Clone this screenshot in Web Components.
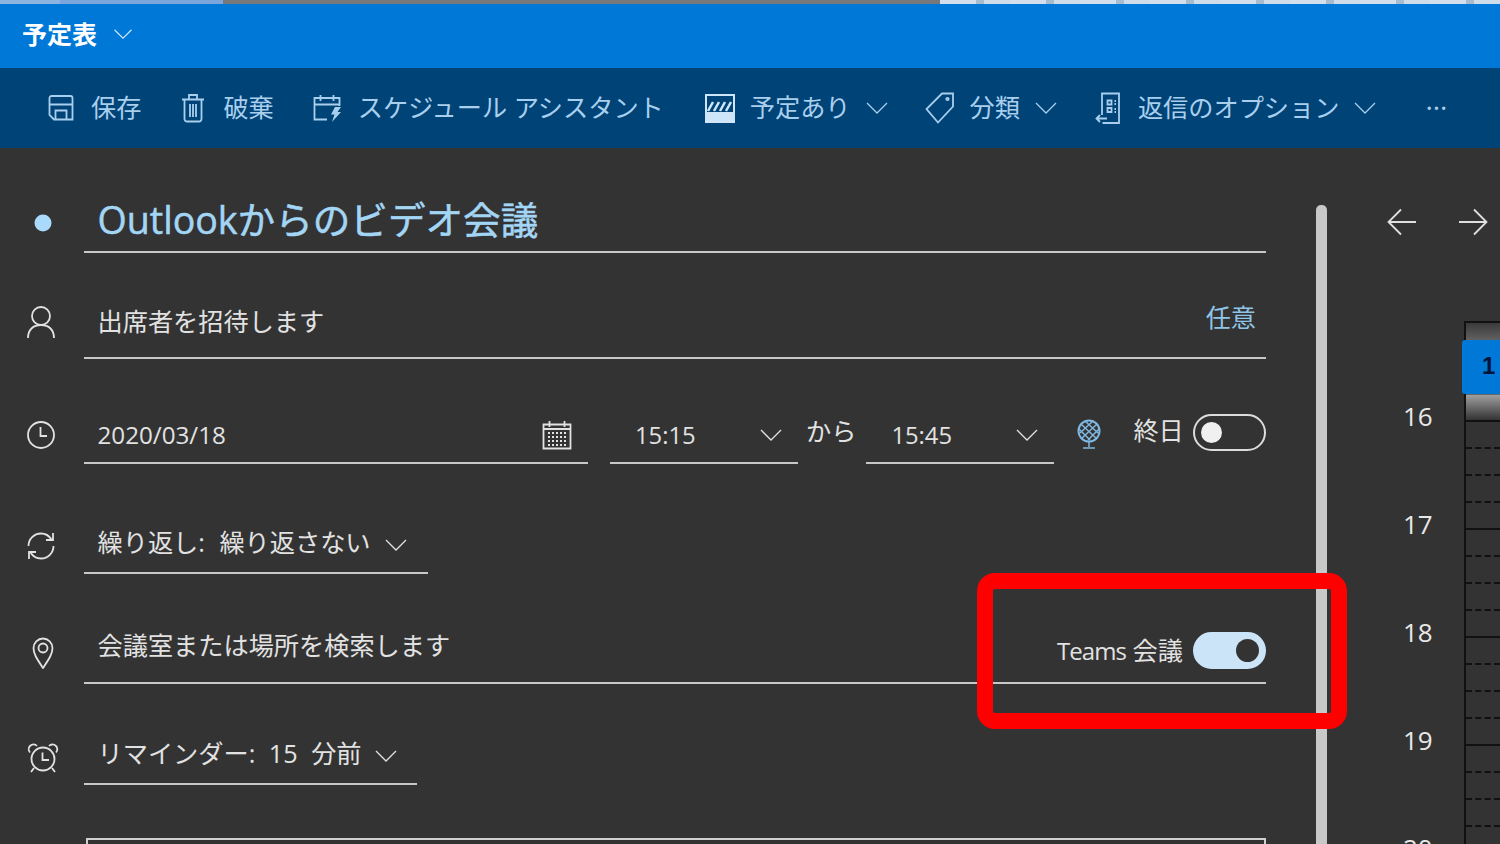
<!doctype html>
<html lang="ja">
<head>
<meta charset="utf-8">
<title>予定表</title>
<style>
html, body { margin: 0; height: 100%; overflow: hidden; background: #333; }
body { font-family: "Open Sans", "Noto Sans CJK JP", sans-serif; }
</style>
</head>
<body>
<event-page>
  <title-bar slot="top">予定表</title-bar>
  <tool-bar slot="top">
    <tool-item icon="save">保存</tool-item>
    <tool-item icon="trash" style="margin-left:-1px">破棄</tool-item>
    <tool-item icon="assist" style="margin-left:1px">スケジュール アシスタント</tool-item>
    <tool-item icon="busy" menu style="margin-left:3px">予定あり</tool-item>
    <tool-item icon="tag" menu style="margin-left:-1px">分類</tool-item>
    <tool-item icon="reply" menu style="margin-left:-2px">返信のオプション</tool-item>
    <tool-item more style="margin-left:11px"></tool-item>
  </tool-bar>

  <form-row style="--row:105px;--icon-b:21px" slot="form">
    <ui-icon slot="icon" name="dot" style="margin-left:4px"></ui-icon>
    <form-field style="height:70px;--text-y:3px;font-size:37.600px;color:#a3d5f5;-webkit-text-stroke:.5px #a3d5f5">Outlookからのビデオ会議</form-field>
  </form-row>
  <form-row style="--row:106px;--icon-b:20px" slot="form">
    <ui-icon slot="icon" name="person"></ui-icon>
    <form-field style="height:70px;--text-y:-2px">出席者を招待します<span slot="end" style="color:#8fc4e6;position:relative;top:-6px;margin-right:10px">任意</span></form-field>
  </form-row>
  <form-row style="--row:105px;--icon-b:14px" slot="form">
    <ui-icon slot="icon" name="clock"></ui-icon>
    <date-line></date-line>
  </form-row>
  <form-row style="--row:110px;--icon-b:13px" slot="form">
    <ui-icon slot="icon" name="sync"></ui-icon>
    <form-field style="height:70px;width:344px;padding-right:21px;--text-y:4px;word-spacing:8px">繰り返し: 繰り返さない<ui-icon slot="end" name="chevron" style="position:relative;top:7px"></ui-icon></form-field>
  </form-row>
  <form-row style="--row:110px;--icon-b:15px" slot="form">
    <ui-icon slot="icon" name="pin" style="margin-left:4px"></ui-icon>
    <form-field style="height:70px;--text-y:-3px">会議室または場所を検索します<span slot="end" style="display:flex;align-items:center;gap:10px;position:relative;top:2px"><span><span style="font-size:24px;letter-spacing:-.9px">Teams</span> 会議</span><on-off checked></on-off></span></form-field>
  </form-row>
  <form-row style="--row:101px;--icon-b:11px" slot="form">
    <ui-icon slot="icon" name="alarm" style="margin-left:4px"></ui-icon>
    <form-field style="height:70px;width:333px;padding-right:20px;--text-y:4px;word-spacing:7px">リマインダー: 15 分前<ui-icon slot="end" name="chevron" style="position:relative;top:7px"></ui-icon></form-field>
  </form-row>
  <note-box slot="form"></note-box>

  <day-rail slot="rail"></day-rail>
</event-page>
<red-mark></red-mark>

<script>
// stroke icons, all drawn on their own small viewBox
const ICONS = {
  chevron: '<svg width="22" height="12" viewBox="0 0 22 12"><path d="M1 1l10 10L21 1" stroke-width="1.300"/></svg>',
  save: '<svg width="26" height="26" viewBox="0 0 26 26"><path d="M1.500 3a2 2 0 0 1 2-2h19a2 2 0 0 1 2 2v21.500H6L1.500 20zM1.500 9.500h23M7.500 24.500v-9h11v9"/></svg>',
  trash: '<svg width="24" height="30" viewBox="0 0 24 30"><path d="M1 6.500h22M8 6V2h8v4M3.500 7v19a2.500 2.500 0 0 0 2.500 2.500h12a2.500 2.500 0 0 0 2.500-2.500V7M9 11v13M12 11v13M15 11v13"/></svg>',
  assist: '<svg width="30" height="30" viewBox="0 0 30 30"><path d="M14 26.500H1.500V5h25v8M1.500 11.500h25M7.500 2v6M20.500 2v6"/><path d="M22 14h6l-3.500 5H28l-9 10 2.500-7.500H18z" fill="#a9cfee" stroke="none"/></svg>',
  busy: '<svg width="30" height="30" viewBox="0 0 30 30"><rect x="0" y="1" width="30" height="29" fill="#cfe6f8" stroke="none"/><rect x="2" y="3" width="26" height="5" fill="#004377" stroke="none"/><rect x="2" y="8" width="26" height="11" fill="#004377" stroke="none"/><path d="M3 18l5-9M9 18l5-9M15 18l5-9M21 18l5-9" stroke="#cfe6f8" stroke-width="2.500"/></svg>',
  tag: '<svg width="30" height="32" viewBox="0 0 30 32"><path d="M17 1.500h11v13L13 30.500 1.500 17z"/><circle cx="22.500" cy="7" r="1.200"/></svg>',
  reply: '<svg width="26" height="32" viewBox="0 0 26 32"><path d="M7 23V1.500h17V31H7.500M12.500 8.500h4v4h-4zM12.500 16h4v4h-4zM19.500 9h1.500M19.500 12h1.500M19.500 17h1.500M19.500 20h1.500M12 26.500H1.500M5 23l-3.500 3.500L5 30"/></svg>',
  dot: '<svg width="18" height="18" viewBox="0 0 18 18"><circle cx="9" cy="9" r="8.500" fill="#a9dafb" stroke="none"/></svg>',
  person: '<svg width="30" height="34" viewBox="0 0 30 34"><circle cx="15" cy="11" r="9"/><path d="M2 33c0-8 5-13 13-13s13 5 13 13"/></svg>',
  clock: '<svg width="30" height="30" viewBox="0 0 30 30"><circle cx="15" cy="15" r="13"/><path d="M14.500 7v9H21"/></svg>',
  sync: '<svg width="30" height="30" viewBox="0 0 30 30"><path d="M2.500 15C2.500 8 8 2.500 15 2.500c4.500 0 8 2 10.500 6M27.500 15c0 7-5.500 12.500-12.500 12.500-4.500 0-8-2-10.500-6M27 2v7h-7M3 28v-7h7"/></svg>',
  pin: '<svg width="22" height="32" viewBox="0 0 22 32"><path d="M11 31C5 22 1.500 17 1.500 11a9.500 9.500 0 0 1 19 0C20.500 17 17 22 11 31z"/><circle cx="11" cy="11" r="4.500"/></svg>',
  alarm: '<svg width="32" height="32" viewBox="0 0 32 32"><circle cx="16" cy="17" r="11.500"/><path d="M15.500 10.500V18H22M3 10.500a4.500 4.500 0 0 1 7-6.500M29 10.500a4.500 4.500 0 0 0-7-6.500M7 26l-3 4M25 26l3 4"/></svg>',
  calendar: '<svg width="30" height="30" viewBox="0 0 30 30"><path d="M1.500 4.500h27v24h-27zM1.500 9h27M7.500 1v6M22.500 1v6"/><path d="M6 13h18M6 17h18M6 21h18M6 25h18" stroke-dasharray="2 2" stroke-width="2"/></svg>',
  globe: '<svg width="28" height="32" viewBox="0 0 28 32" style="stroke:#7fb8e0"><circle cx="14" cy="13" r="10.500" stroke-width="2"/><path d="M6 6l16 15M10 3l13 12M4 11l11 11M22 6L6 21M18 3L5 15M24 11L13 22M14 24v5M8 30h12" stroke-width="1.500"/></svg>',
  left: '<svg width="30" height="28" viewBox="0 0 30 28"><path d="M29 14H2M14 1.500L1.500 14 14 26.500"/></svg>',
  right: '<svg width="30" height="28" viewBox="0 0 30 28"><path d="M1 14h27M16 1.500L28.500 14 16 26.500"/></svg>'
};

function shadow(el, html) {
  el.attachShadow({mode: 'open'}).innerHTML = html;
}

class UiIcon extends HTMLElement {
  constructor() {
    super();
    shadow(this, `<style>
:host { display: inline-flex; align-items: center; justify-content: center; flex: none; }
svg { display: block; fill: none; stroke: currentColor; stroke-width: 1.800; }
</style>${ICONS[this.getAttribute('name')] || ''}`);
  }
}

class EventPage extends HTMLElement {
  constructor() {
    super();
    shadow(this, `<style>
:host { display: flex; flex-direction: column; width: 1500px; height: 844px; overflow: hidden; background: #333; }
.strip { display: flex; height: 4px; flex: none; }
.strip i { display: block; }
.a { width: 60px; background: #8eb4e0; }
.b { width: 163px; background: #7ba6dc; }
.c { width: 717px; background: #77787a; }
.d { flex: 1; background: repeating-linear-gradient(90deg, #d3dfec 0 36px, #a8bccf 36px 44px, #cfdcea 44px 70px); }
main { flex: 1; display: flex; min-height: 0; }
.form { width: 1266px; flex: none; display: flex; flex-direction: column; }
.bar { width: 11px; margin: 57px 0 0 50px; flex: none; background: #c8c8c8; border-radius: 5px 5px 0 0; }
</style>
<div class="strip"><i class="a"></i><i class="b"></i><i class="c"></i><i class="d"></i></div>
<slot name="top"></slot>
<main>
  <div class="form"><slot name="form"></slot></div>
  <div class="bar"></div>
  <slot name="rail"></slot>
</main>`);
  }
}

class TitleBar extends HTMLElement {
  constructor() {
    super();
    shadow(this, `<style>
:host { display: flex; align-items: center; gap: 15px; height: 64px; flex: none; padding: 0 0 4px 22px; box-sizing: border-box; background: #0078d7; color: #fff; font-size: 25px; font-weight: 700; line-height: 1; }
ui-icon { color: #d3e8f8; }
</style><slot></slot><ui-icon name="chevron" style="transform:scale(.85)"></ui-icon>`);
  }
}

class ToolBar extends HTMLElement {
  constructor() {
    super();
    shadow(this, `<style>
:host { display: flex; align-items: center; gap: 38px; height: 80px; flex: none; padding-left: 46px; box-sizing: border-box; background: #004377; color: #a9cfee; font-size: 25.200px; font-weight: 400; line-height: 1; white-space: nowrap; }
</style><slot></slot>`);
  }
}

class ToolItem extends HTMLElement {
  constructor() {
    super();
    const more = this.hasAttribute('more');
    const icon = this.getAttribute('icon');
    shadow(this, `<style>
:host { display: flex; align-items: center; gap: 15px; }
.ico { width: 30px; justify-content: center; }
.dots { font-size: 28px; letter-spacing: 0; position: relative; top: -1px; }
</style>
${more ? '<span class="dots">···</span>' : `<ui-icon class="ico" name="${icon}"></ui-icon><slot></slot>`}
${this.hasAttribute('menu') ? '<ui-icon name="chevron"></ui-icon>' : ''}`);
  }
}

class FormRow extends HTMLElement {
  constructor() {
    super();
    shadow(this, `<style>
:host { display: grid; grid-template-columns: 84px 1fr; align-items: end; height: var(--row); flex: none; color: #e2e2e2; font-size: 25.200px; font-weight: 400; }
.icon { display: flex; justify-content: center; padding: 0 2px var(--icon-b) 0; }
</style><div class="icon"><slot name="icon"></slot></div><slot></slot>`);
  }
}

class FormField extends HTMLElement {
  constructor() {
    super();
    shadow(this, `<style>
:host { display: flex; align-items: center; justify-content: space-between; box-sizing: border-box; border-bottom: 2px solid #c8c8c8; padding-left: 13.500px; white-space: nowrap; line-height: 1.2; }
.t { position: relative; top: var(--text-y, 0); }
.end { display: flex; align-items: center; }
</style><span class="t"><slot></slot></span><span class="end"><slot name="end"></slot></span>`);
  }
}

class OnOff extends HTMLElement {
  constructor() {
    super();
    shadow(this, `<style>
:host { display: flex; align-items: center; width: 73px; height: 37px; box-sizing: border-box; border: 2.500px solid #dcdcdc; border-radius: 19px; padding: 0 0 0 6px; flex: none; }
i { display: block; width: 21px; height: 21px; border-radius: 50%; background: #f0f0f0; }
:host([checked]) { background: #cce4f8; border-color: #cce4f8; justify-content: flex-end; padding: 0 5px 0 0; }
:host([checked]) i { width: 23px; height: 23px; background: #333; }
</style><i></i>`);
  }
}

class DateLine extends HTMLElement {
  constructor() {
    super();
    shadow(this, `<style>
:host { display: flex; align-items: flex-end; color: #e2e2e2; white-space: nowrap; font-size: 25.200px; font-weight: 400; }
form-field { height: 70px; padding-top: 14px; font-size: 24.200px; }
.time { margin-left: 22px; }
.t2, .time { width: 188px; padding-left: 25px; padding-right: 16px; font-size: 23.800px; }
.small { position: relative; top: -16px; }
.kara { margin: 0 10px 0 8px; }
.all { margin: 0 9px 0 30px; top: -17px; }
.toggle { position: relative; top: -13px; }
.g { position: relative; top: -14px; margin-left: 21px; }
</style>
<form-field style="width:504px;padding-right:16px">2020/03/18<ui-icon slot="end" name="calendar"></ui-icon></form-field>
<form-field class="time">15:15<ui-icon slot="end" name="chevron"></ui-icon></form-field>
<span class="small kara">から</span>
<form-field class="t2">15:45<ui-icon slot="end" name="chevron"></ui-icon></form-field>
<ui-icon class="g" name="globe"></ui-icon>
<span class="small all">終日</span>
<on-off class="toggle"></on-off>`);
  }
}

class NoteBox extends HTMLElement {
  constructor() {
    super();
    shadow(this, `<style>
:host { display: block; height: 40px; margin: 53px 0 0 86px; box-sizing: border-box; border: 2px solid #d0d0d0; border-bottom: 0; flex: none; }
</style>`);
  }
}

class DayRail extends HTMLElement {
  constructor() {
    super();
    const hours = [16, 17, 18, 19, 20];
    shadow(this, `<style>
:host { display: grid; grid-template-columns: 137px 1fr; grid-template-rows: 148px 1fr; flex: 1; min-width: 0; color: #e8e8e8; overflow: hidden; }
.nav { grid-column: 1 / 3; display: flex; align-items: flex-start; gap: 41px; padding: 60px 0 0 60px; color: #e0e0e0; }
.labels { padding: 66px 0 0 76px; font-size: 26px; font-weight: 400; }
.labels div { height: 108px; line-height: 108px; }
.grid { position: relative; box-sizing: border-box; margin-top: 25px; border-left: 2px solid #111; border-top: 2px solid #111; height: 560px; }
.head { height: 99px; box-sizing: border-box; border-bottom: 2px solid #111; background: linear-gradient(#3a3a3a, #666 20%, #666 74%, #a0a0a0 74%, #333 100%); }
.q { height: 27px; box-sizing: border-box; border-bottom: 2px dashed #111; }
.event { position: absolute; left: -4px; right: 0; top: 17px; height: 54px; background: #0078d7; border-radius: 3px 0 0 3px; color: #00143a; font: 700 24px "Liberation Sans", sans-serif; line-height: 52px; padding-left: 20px; }
</style>
<div class="nav"><ui-icon name="left"></ui-icon><ui-icon name="right"></ui-icon></div>
<div class="labels">${hours.map(h => `<div>${h}</div>`).join('')}</div>
<div class="grid">
  <div class="head"></div>
  <div>${Array.from({length: 20}, (_, i) => `<div class="q" style="${(i + 1) % 4 ? '' : 'border-bottom-style:solid'}"></div>`).join('')}</div>
  <div class="event">1</div>
</div>`);
  }
}

// the annotation someone drew over the screenshot
class RedMark extends HTMLElement {
  constructor() {
    super();
    shadow(this, `<style>
:host { position: absolute; left: 977px; top: 573px; width: 370px; height: 156px; box-sizing: border-box; border: 16px solid #fe0000; border-radius: 18px; }
</style>`);
  }
}

customElements.define('ui-icon', UiIcon);
customElements.define('event-page', EventPage);
customElements.define('title-bar', TitleBar);
customElements.define('tool-bar', ToolBar);
customElements.define('tool-item', ToolItem);
customElements.define('form-row', FormRow);
customElements.define('form-field', FormField);
customElements.define('on-off', OnOff);
customElements.define('date-line', DateLine);
customElements.define('note-box', NoteBox);
customElements.define('day-rail', DayRail);
customElements.define('red-mark', RedMark);
</script>
</body>
</html>
